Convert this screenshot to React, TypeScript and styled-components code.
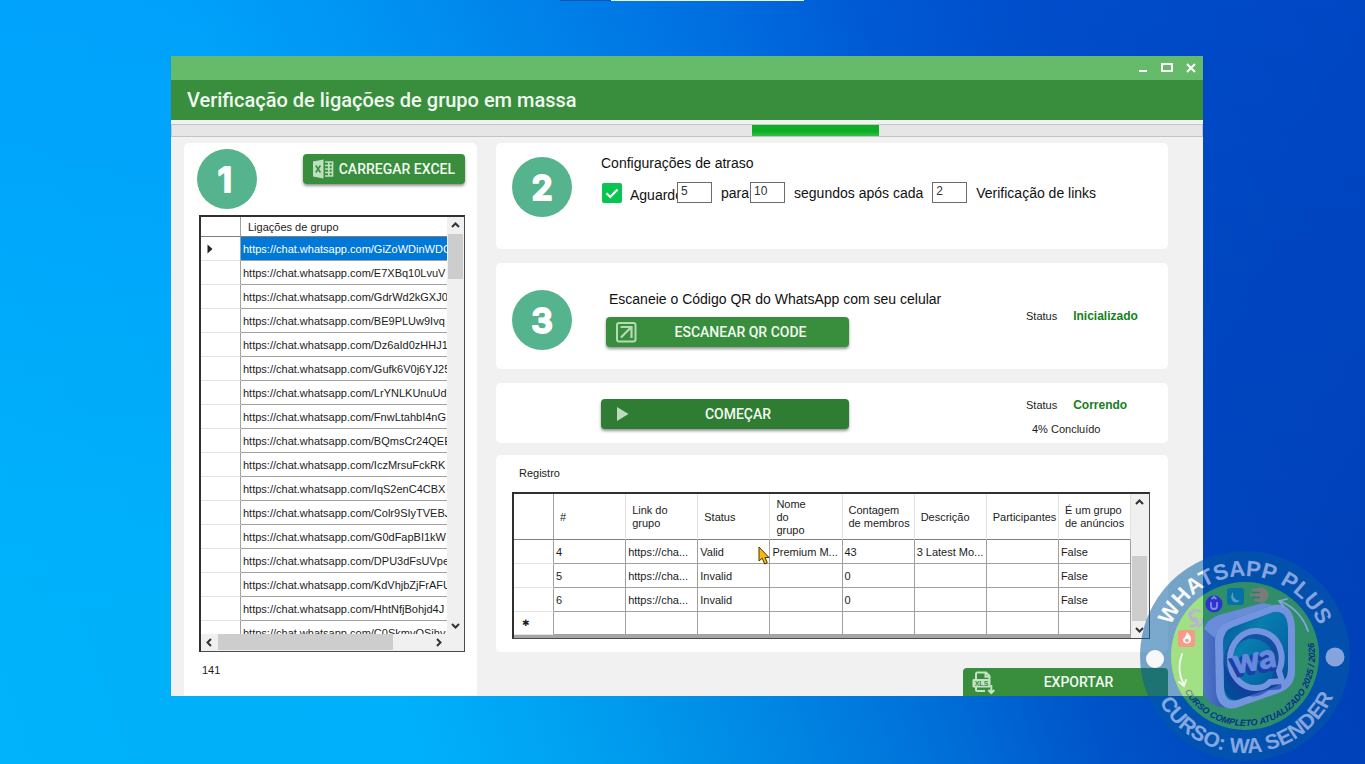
import React from "react";
import styled, { createGlobalStyle, css } from "styled-components";

const GlobalStyle = createGlobalStyle`
  *, *::before, *::after { box-sizing: border-box; }
  body {
    margin: 0;
    font-family: "Liberation Sans", Arial, sans-serif;
    font-size: 11px;
    line-height: 13px;
    color: #1c1c1c;
  }
`;

const Desktop = styled.main`
  position: relative;
  min-height: 100vh;
  padding: 56px 162px 68px 171px;
  overflow: hidden;
  background:
    linear-gradient(rgba(0, 110, 255, 0.22), rgba(0, 110, 255, 0) 80%),
    linear-gradient(72deg, #00b3fb 0%, #00aff9 27%, #009ff0 37%, #0088e4 48%, #006fd8 59%, #0053c8 69%, #0043bb 80%, #003cb4 100%);
`;

const TopStrip = styled.div`
  position: absolute;
  top: 0;
  left: 41%;
  width: 244px;
  height: 1px;
  background: linear-gradient(to right, #0057b8 51px, #e8f2fb 51px);
`;

const AppWindow = styled.section`
  min-width: 960px;
  background: #f1f1f1;
`;

const TitleBar = styled.div`
  display: flex;
  justify-content: flex-end;
  height: 24px;
  background: #66bb6a;
`;

const WindowButton = styled.button`
  display: grid;
  place-items: center;
  width: 24px;
  height: 24px;
  padding: 0;
  border: 0;
  background: transparent;
`;

const Header = styled.header`
  display: flex;
  align-items: center;
  height: 40px;
  padding: 0 16px;
  background: #388e3c;
  h1 {
    margin: 0;
    font: 500 20px/24px Roboto, sans-serif;
    color: #f0f8f0;
  }
`;

const Progress = styled.div`
  height: 13px;
  margin-top: 4px;
  border: 1px solid #c4c4c4;
  background: #e6e6e6;
`;

const ProgressChunk = styled.div`
  width: 127px;
  height: 11px;
  margin-left: 56.3%;
  background: linear-gradient(#0cae25 60%, #38bd4d);
`;

const Content = styled.div`
  display: grid;
  grid-template-columns: 293px 1fr;
  gap: 19px;
  padding: 6px 35px 0 13px;
`;

const Card = styled.section<{ $height?: number }>`
  background: #fff;
  border-radius: 5px;
  min-height: ${(p) => (p.$height ? `${p.$height}px` : "0")};
`;

const ListCard = styled(Card)`
  padding: 6px 12px 0 13px;
  border-radius: 5px 5px 0 0;
`;

const ListTop = styled.div`
  display: flex;
  justify-content: space-between;
  align-items: flex-start;
  margin-bottom: 6px;
  button { margin-top: 5px; }
`;

const BadgeSvg = styled.svg`
  display: block;
  width: 60px;
  height: 60px;
`;

const ActionButton = styled.button<{ $dark?: boolean; $clipped?: boolean }>`
  display: flex;
  align-items: center;
  gap: 6px;
  height: ${(p) => (p.$clipped ? "28px" : "30px")};
  padding: 0 10px;
  border: 0;
  border-radius: ${(p) => (p.$clipped ? "4px 4px 0 0" : "4px")};
  background: ${(p) => (p.$dark ? "#2e7d32" : "#388e3c")};
  box-shadow: ${(p) => (p.$clipped ? "none" : "0 2px 3px rgba(0, 0, 0, 0.42)")};
  color: #f2faf2;
  font: 500 14px/20px Roboto, sans-serif;
  white-space: nowrap;
  svg { flex: none; width: 20px; height: 20px; overflow: visible; }
  span { flex: 1; text-align: center; }
`;

const GridFrame = styled.div`
  border: 1px solid #4a4a4a;
  border-top: 2px solid #303030;
  border-left: 2px solid #303030;
`;

const ListFrame = styled(GridFrame)`
  display: grid;
  grid-template-columns: minmax(0, 1fr) 17px;
  grid-template-rows: 417px 17px;
  margin-left: 2px;
`;

const Clip = styled.div`
  overflow: hidden;
`;

const Total = styled.p`
  margin: 11px 5px;
  font-size: 11px;
  line-height: 14px;
`;

const LinkTable = styled.table`
  width: 100%;
  table-layout: fixed;
  border-spacing: 0;
  th, td {
    height: 24px;
    padding: 1px 0 0 2px;
    overflow: hidden;
    white-space: nowrap;
    text-align: left;
    font-weight: 400;
    border-bottom: 1px solid #a0a0a0;
  }
  th { height: 20px; padding-left: 7px; border-bottom-color: #808080; }
  th:first-child { width: 40px; border-right: 1px solid #a0a0a0; }
  td:first-child {
    padding-left: 6px;
    border-right: 1px solid #a0a0a0;
    border-bottom-color: #e2e2e2;
  }
  svg { display: block; }
`;

const LinkCell = styled.td<{ $selected?: boolean }>`
  ${(p) =>
    p.$selected &&
    css`
      background: #0078d7;
      color: #fff;
    `}
`;

const Scroll = styled.div<{ $horizontal?: boolean }>`
  display: flex;
  flex-direction: ${(p) => (p.$horizontal ? "row" : "column")};
  background: #f0f0f0;
`;

const ScrollButton = styled.button`
  display: grid;
  flex: none;
  place-items: center;
  width: 17px;
  height: 17px;
  padding: 0;
  border: 0;
  background: transparent;
`;

const ScrollTrack = styled.div<{ $horizontal?: boolean; $end?: boolean }>`
  display: flex;
  flex: 1;
  flex-direction: ${(p) => (p.$horizontal ? "row" : "column")};
  justify-content: ${(p) => (p.$end ? "flex-end" : "flex-start")};
`;

const Thumb = styled.div<{ $length: number; $horizontal?: boolean }>`
  flex: none;
  background: #cdcdcd;
  width: ${(p) => (p.$horizontal ? `${p.$length}px` : "15px")};
  height: ${(p) => (p.$horizontal ? "16px" : `${p.$length}px`)};
  margin: ${(p) => (p.$horizontal ? "0" : "0 1px")};
`;

const RightColumn = styled.div`
  display: flex;
  flex-direction: column;
  gap: 12px;
  min-width: 0;
`;

const Steps = styled.div`
  display: flex;
  flex-direction: column;
  gap: 14px;
`;

const StepCard = styled(Card)`
  display: grid;
  grid-template-columns: 89px 1fr auto;
  padding-left: 16px;
`;

const BadgeSlot = styled.div<{ $top: number }>`
  padding-top: ${(p) => p.$top}px;
`;

const Stack = styled.div<{ $top: number; $left?: number }>`
  display: flex;
  flex-direction: column;
  align-items: flex-start;
  gap: 10px;
  padding: ${(p) => p.$top}px 0 0 ${(p) => p.$left ?? 0}px;
`;

const Lead = styled.p<{ $indent?: number }>`
  margin: 0 0 0 ${(p) => p.$indent ?? 0}px;
  font-size: 14px;
  line-height: 16px;
  color: #111;
`;

const DelayRow = styled.div`
  display: flex;
  align-items: center;
  height: 22px;
  padding-left: 1px;
  font-size: 14px;
  line-height: 18px;
  color: #111;
  white-space: nowrap;
`;

const Check = styled.input`
  appearance: none;
  flex: none;
  width: 20px;
  height: 20px;
  margin: 2px 8px 0 0;
  border-radius: 2px;
  background: #08c552
    url("data:image/svg+xml,%3Csvg xmlns='http://www.w3.org/2000/svg' viewBox='0 0 20 20'%3E%3Cpath d='M4.5 10.2l3.8 3.8 7.2-7.4' fill='none' stroke='white' stroke-width='2.2'/%3E%3C/svg%3E");
`;

const WaitLabel = styled.label`
  width: 47px;
  margin-top: 6px;
  overflow: hidden;
`;

const DelayLabel = styled.label<{ $before?: number; $after?: number }>`
  margin: 2px ${(p) => p.$after ?? 0}px 0 ${(p) => p.$before ?? 0}px;
`;

const NumberBox = styled.input`
  flex: none;
  width: 35px;
  height: 21px;
  padding: 0 3px 2px;
  border: 1px solid #6c6c6c;
  border-radius: 0;
  background: #fff;
  font: 12px/16px "Liberation Sans", Arial, sans-serif;
  color: #333;
`;

const StatusBlock = styled.div<{ $top: number }>`
  display: flex;
  flex-direction: column;
  gap: 8px;
  width: 142px;
  padding-top: ${(p) => p.$top}px;
  line-height: 16px;
  p { margin: 0; }
  p + p { padding-left: 6px; }
  strong { margin-left: 16px; font-size: 12px; color: #15801a; }
`;

const LogCard = styled(Card)`
  padding: 11px 18px 14px 16px;
  h2 {
    margin: 0 0 12px 7px;
    font-size: 11px;
    line-height: 14px;
    font-weight: 400;
  }
`;

const LogFrame = styled(GridFrame)`
  display: grid;
  grid-template-columns: minmax(0, 1fr) 18px;
  height: 147px;
  margin-bottom: -1px;
  background: #a6a6a6;
`;

const LogTable = styled.table`
  width: 100%;
  table-layout: fixed;
  border-spacing: 0;
  background: #fff;
  th, td {
    position: relative;
    height: 24px;
    padding: 1px 2px 0;
    text-align: left;
    font-weight: 400;
    white-space: nowrap;
    border-right: 1px solid #a0a0a0;
    border-bottom: 1px solid #a0a0a0;
  }
  th {
    height: 46px;
    padding: 1px 0 0 6px;
    border-right-color: #e2e2e2;
    border-bottom-color: #808080;
    white-space: pre-line;
  }
  th:first-child { width: 40px; border-right-color: #a0a0a0; }
  td:first-child { border-bottom-color: #e2e2e2; padding-left: 8px; font-size: 9px; }
  tr:last-child td { height: 23px; }
`;

const Pointer = styled.svg`
  position: absolute;
  right: -1px;
  top: 6px;
  z-index: 2;
  width: 12px;
  height: 19px;
`;

const ExportRow = styled.footer`
  display: flex;
  justify-content: flex-end;
  padding-top: 4px;
  button { width: 205px; }
`;

const WideButton = styled(ActionButton)<{ $width: number }>`
  width: ${(p) => p.$width}px;
`;

const Watermark = styled.svg`
  position: absolute;
  right: 14px;
  bottom: 2px;
  width: 212px;
  height: 212px;
  opacity: 0.52;
`;

function StepBadge({ n }: { n: number }) {
  return (
    <BadgeSvg viewBox="0 0 60 60" role="img" aria-label={`Passo ${n}`}>
      <circle cx="30" cy="30" r="30" fill="#55b38d" />
      <text
        x={n === 1 ? 28 : 30}
        y="43"
        textAnchor="middle"
        fontFamily="Inter, sans-serif"
        fontWeight="600"
        fontSize="34"
        fill="#fff"
        stroke="#fff"
        strokeWidth="2"
        strokeLinejoin="round"
      >
        {n}
      </text>
    </BadgeSvg>
  );
}

const arrowPaths = {
  up: "M2 7l3.500-3.500L9 7",
  down: "M2 4l3.500 3.500L9 4",
  left: "M7 2L3.500 5.500 7 9",
  right: "M4 2l3.500 3.500L4 9",
};

function Arrow({ dir }: { dir: keyof typeof arrowPaths }) {
  return (
    <ScrollButton type="button" aria-label={dir}>
      <svg width="11" height="11" viewBox="0 0 11 11">
        <path d={arrowPaths[dir]} fill="none" stroke="#333" strokeWidth="2" />
      </svg>
    </ScrollButton>
  );
}

function ExcelIcon() {
  return (
    <svg viewBox="0 0 20 20" aria-hidden="true">
      <path d="M0 2.500L10.500 0.500v19L0 17.500z" fill="#bfe0c0" />
      <path d="M2.800 6.500l4.600 7M7.400 6.500l-4.600 7" stroke="#388e3c" strokeWidth="1.600" />
      <path d="M12 3h7.500v14H12M12 6.500h7.500M12 10h7.500M12 13.500h7.500M15.800 3v14" fill="none" stroke="#bfe0c0" strokeWidth="1.700" />
    </svg>
  );
}

function ScanIcon() {
  return (
    <svg viewBox="0 0 20 20" aria-hidden="true">
      <rect x="1" y="1" width="18.500" height="18.500" rx="2" fill="none" stroke="#b4dab6" strokeWidth="2" />
      <path d="M4.500 5h11v11M15.300 5L5 15.500" fill="none" stroke="#b4dab6" strokeWidth="2.200" />
    </svg>
  );
}

function PlayIcon() {
  return (
    <svg viewBox="0 0 20 20" aria-hidden="true">
      <path d="M6 3l11.500 7L6 17z" fill="#bcdcbd" />
    </svg>
  );
}

function XlsIcon() {
  return (
    <svg viewBox="0 0 20 20" aria-hidden="true">
      <path d="M3 7.500V2Q3 .5 4.500.5h8.500l3.500 3.500v3.500M3 15v2.500Q3 19 4.500 19H12M12.500.8v4h4" fill="none" stroke="#c5e3c6" strokeWidth="2" />
      <rect x="-0.500" y="7" width="18" height="8.500" rx="1.200" fill="#c5e3c6" />
      <text x="8.500" y="13.800" textAnchor="middle" fontFamily="Liberation Sans, sans-serif" fontWeight="700" fontSize="7" fill="#388e3c">
        XLS
      </text>
      <path d="M18.300 13v7.500M15.300 18l3 3 3-3" fill="none" stroke="#c5e3c6" strokeWidth="2" />
    </svg>
  );
}

function CourseSeal() {
  return (
    <Watermark viewBox="0 0 212 212" role="img" aria-label="Curso WA Sender">
      <defs>
        <path id="sealTop" d="M26 106a80 80 0 0 1 160 0" />
        <path id="sealBottom" d="M9 106a97 97 0 0 0 194 0" />
        <path id="sealInner" d="M36 106a70 70 0 0 0 140 0a70 70 0 0 0 -12 -39" />
        <linearGradient id="tile" x1="0" y1="0" x2="1" y2="1">
          <stop offset="0" stopColor="#0a5a70" />
          <stop offset="0.350" stopColor="#12b3a6" />
          <stop offset="0.650" stopColor="#0a8f94" />
          <stop offset="1" stopColor="#053f6b" />
        </linearGradient>
        <linearGradient id="side" x1="0" y1="0" x2="1" y2="0">
          <stop offset="0" stopColor="#9ca0d0" />
          <stop offset="1" stopColor="#4c529c" />
        </linearGradient>
      </defs>
      <circle cx="106" cy="106" r="105" fill="#045ca3" />
      <circle cx="106" cy="106" r="74" fill="#5ad41f" />
      <g fontFamily="Liberation Sans, sans-serif" fontWeight="700" fill="#fff" textAnchor="middle">
        <text fontSize="22">
          <textPath href="#sealTop" startOffset="50%">WHATSAPP PLUS</textPath>
        </text>
        <text fontSize="21">
          <textPath href="#sealBottom" startOffset="51%">CURSO: WA SENDER</textPath>
        </text>
      </g>
      <text fontFamily="Liberation Sans, sans-serif" fontWeight="700" fontStyle="italic" fontSize="9" fill="#06245c">
        <textPath href="#sealInner" startOffset="37">CURSO COMPLETO ATUALIZADO 2025 / 2026</textPath>
      </text>
      <circle cx="16" cy="109" r="9" fill="#fff" />
      <circle cx="196" cy="107" r="9.500" fill="#fff" />

      <path d="M82 65Q64 69 64 84L64 138Q65 152 80 157L98 158V62z" fill="url(#side)" />
      <path d="M134 55L90 71Q76 76 76 91L77 142Q80 161 97 158L142 142Q156 136 156 121V78Q155 52 134 55z" fill="#dcdeff" />
      <path d="M134 62L94 77Q84 81 84 93L85 140Q87 153 98 150L138 136Q149 131 149 119V80Q149 59 134 62z" fill="url(#tile)" />
      <path d="M134 55L90 71Q78 76 76 88L65 79Q68 69 80 65L124 53z" fill="#c9cdf6" />
      <path d="M98 150Q87 150 85 136V112Q92 138 122 139L138 136z" fill="#0a2f66" opacity="0.700" />
      <path d="M116 82C101 82 89 95 90 112C91 128 103 141 117 140Q124 139 130 134L141 133L139 123Q143 114 141 104Q136 84 116 82z" fill="none" stroke="#2c3288" strokeWidth="7" strokeLinejoin="round" transform="translate(-2 3)" opacity="0.600" />
      <path d="M118 81C104 80 91 93 91 109C91 126 103 139 118 138Q126 138 131 132L143 131L140 121Q144 112 142 102Q138 83 118 81z" fill="none" stroke="#dcdeff" strokeWidth="6" strokeLinejoin="round" />
      <g fontFamily="Lato, sans-serif" fontWeight="900" fontSize="33" textAnchor="middle">
        <text transform="translate(115 123) rotate(-10)" fill="#343a94" stroke="#343a94" strokeWidth="3">wa</text>
        <text transform="translate(117 120) rotate(-10)" fill="#c3c9fb" stroke="#c3c9fb" strokeLinejoin="round" strokeWidth="1">wa</text>
      </g>

      <rect x="39" y="80" width="17" height="17" rx="3" fill="#ff4c2e" />
      <path d="M48 82q5 5 4 8a4 4 0 1 1-8-1q2-1 4-7z" fill="#fff" />
      <circle cx="48" cy="90.500" r="1.800" fill="#ff4c2e" />
      <g fill="none" stroke="#7f80b6" strokeWidth="2.500">
        <path d="M62 62q-7-4-10 0t1 6q6 0 6 4t-8 4" />
        <path d="M55 61q-7 5-2 9 5 1 5 4M58 77q8-3 5-9" />
      </g>
      <circle cx="75" cy="54" r="8.500" fill="#5a1ee0" />
      <path d="M72 52v4q0 3 3 3t3-3v-4M72.500 49l2.500-2 2.500 2" fill="none" stroke="#e3d8ff" strokeWidth="1.800" />
      <rect x="88" y="38" width="17" height="17" rx="3" fill="#0c9a96" />
      <path d="M94 42q-1 8 7 9-6 3-8-1-2-4 1-8z" fill="#a5f0d5" />
      <circle cx="122" cy="45" r="7.500" fill="#e8b03c" />
      <path d="M113 40h8M111 45h8M115 50h7" stroke="#e8b03c" strokeWidth="2.500" />
      <path d="M114 42.500h7M114 47.500h7" stroke="#49b030" strokeWidth="1.500" />
      <g fill="none" stroke="#fff" strokeWidth="1.800" strokeLinecap="round">
        <path d="M43 104q-6 16 2 31M40 132l5 4 2-6" />
        <path d="M169 81q-7-21-28-30M145 57l-5-6 8-2" />
      </g>
    </Watermark>
  );
}

const links = [
  "GiZoWDinWDC",
  "E7XBq10LvuV",
  "GdrWd2kGXJ0",
  "BE9PLUw9Ivq",
  "Dz6aId0zHHJ1",
  "Gufk6V0j6YJ25",
  "LrYNLKUnuUd",
  "FnwLtahbI4nG",
  "BQmsCr24QEE",
  "IczMrsuFckRK",
  "IqS2enC4CBX",
  "Colr9SIyTVEBJ",
  "G0dFapBI1kW",
  "DPU3dFsUVpe",
  "KdVhjbZjFrAFU",
  "HhtNfjBohjd4J",
  "C0SkmyQSihv",
];

const columns = [
  "#",
  "Link do\ngrupo",
  "Status",
  "Nome\ndo\ngrupo",
  "Contagem\nde membros",
  "Descrição",
  "Participantes",
  "É um grupo\nde anúncios",
];

const logRows = [
  ["4", "https://cha...", "Valid", "Premium M...", "43", "3 Latest Mo...", "", "False"],
  ["5", "https://cha...", "Invalid", "", "0", "", "", "False"],
  ["6", "https://cha...", "Invalid", "", "0", "", "", "False"],
  ["", "", "", "", "", "", "", ""],
];

export default function App() {
  return (
    <>
      <GlobalStyle />
      <Desktop>
        <TopStrip />
        <AppWindow>
          <TitleBar>
            <WindowButton type="button" aria-label="Minimizar">
              <svg width="12" height="12" viewBox="0 0 12 12"><path d="M2 9h8" stroke="#fff" strokeWidth="2" /></svg>
            </WindowButton>
            <WindowButton type="button" aria-label="Maximizar">
              <svg width="12" height="12" viewBox="0 0 12 12"><path d="M1 2h10v7H1z" fill="none" stroke="#fff" strokeWidth="2" /></svg>
            </WindowButton>
            <WindowButton type="button" aria-label="Fechar">
              <svg width="12" height="12" viewBox="0 0 12 12"><path d="M2 2l8 8M10 2l-8 8" stroke="#fff" strokeWidth="2" /></svg>
            </WindowButton>
          </TitleBar>
          <Header>
            <h1>Verificação de ligações de grupo em massa</h1>
          </Header>
          <Progress role="progressbar">
            <ProgressChunk />
          </Progress>

          <Content>
            <ListCard>
              <ListTop>
                <StepBadge n={1} />
                <ActionButton type="button">
                  <ExcelIcon />
                  <span>CARREGAR EXCEL</span>
                </ActionButton>
              </ListTop>
              <ListFrame>
                <Clip>
                  <LinkTable>
                    <thead>
                      <tr>
                        <th />
                        <th>Ligações de grupo</th>
                      </tr>
                    </thead>
                    <tbody>
                      {links.map((code, i) => (
                        <tr key={code}>
                          <td>
                            {i === 0 && (
                              <svg width="6" height="10" viewBox="0 0 6 10">
                                <path d="M0.500 0.500L5.500 5l-5 4.500z" fill="#222" />
                              </svg>
                            )}
                          </td>
                          <LinkCell $selected={i === 0}>https://chat.whatsapp.com/{code}</LinkCell>
                        </tr>
                      ))}
                    </tbody>
                  </LinkTable>
                </Clip>
                <Scroll>
                  <Arrow dir="up" />
                  <ScrollTrack><Thumb $length={45} /></ScrollTrack>
                  <Arrow dir="down" />
                </Scroll>
                <Scroll $horizontal>
                  <Arrow dir="left" />
                  <ScrollTrack $horizontal><Thumb $horizontal $length={175} /></ScrollTrack>
                  <Arrow dir="right" />
                </Scroll>
                <Scroll />
              </ListFrame>
              <Total>141</Total>
            </ListCard>

            <RightColumn>
              <Steps>
                <StepCard $height={106}>
                  <BadgeSlot $top={14}><StepBadge n={2} /></BadgeSlot>
                  <Stack $top={12}>
                    <Lead>Configurações de atraso</Lead>
                    <DelayRow>
                      <Check type="checkbox" id="wait" defaultChecked />
                      <WaitLabel htmlFor="wait">Aguarde</WaitLabel>
                      <NumberBox type="text" aria-label="De" defaultValue="5" />
                      <DelayLabel htmlFor="delayTo" $before={9} $after={1}>para</DelayLabel>
                      <NumberBox type="text" id="delayTo" defaultValue="10" />
                      <DelayLabel htmlFor="every" $before={9} $after={9}>segundos após cada</DelayLabel>
                      <NumberBox type="text" id="every" defaultValue="2" />
                      <DelayLabel htmlFor="every" $before={9}>Verificação de links</DelayLabel>
                    </DelayRow>
                  </Stack>
                </StepCard>

                <StepCard $height={106}>
                  <BadgeSlot $top={27}><StepBadge n={3} /></BadgeSlot>
                  <Stack $top={28} $left={5}>
                    <Lead $indent={3}>Escaneie o Código QR do WhatsApp com seu celular</Lead>
                    <WideButton type="button" $width={243}>
                      <ScanIcon />
                      <span>ESCANEAR QR CODE</span>
                    </WideButton>
                  </Stack>
                  <StatusBlock $top={45}>
                    <p>Status<strong>Inicializado</strong></p>
                  </StatusBlock>
                </StepCard>

                <StepCard $height={60}>
                  <BadgeSlot $top={0} />
                  <Stack $top={16}>
                    <WideButton type="button" $dark $width={248}>
                      <PlayIcon />
                      <span>COMEÇAR</span>
                    </WideButton>
                  </Stack>
                  <StatusBlock $top={14}>
                    <p>Status<strong>Correndo</strong></p>
                    <p>4% Concluído</p>
                  </StatusBlock>
                </StepCard>
              </Steps>

              <LogCard>
                <h2>Registro</h2>
                <LogFrame>
                  <div>
                    <LogTable>
                      <thead>
                        <tr>
                          <th />
                          {columns.map((name) => (
                            <th key={name}>{name}</th>
                          ))}
                        </tr>
                      </thead>
                      <tbody>
                        {logRows.map((row, r) => (
                          <tr key={r}>
                            <td>{r === logRows.length - 1 ? "✱" : ""}</td>
                            {row.map((value, c) => (
                              <td key={c}>
                                {value}
                                {r === 0 && c === 2 && (
                                  <Pointer viewBox="0 0 12 19">
                                    <path d="M1 1v14l3.200-2.800 2.500 5.800 2.600-1.200-2.300-5.300H11z" fill="#f7b90f" stroke="#4a3608" strokeWidth="1" />
                                  </Pointer>
                                )}
                              </td>
                            ))}
                          </tr>
                        ))}
                      </tbody>
                    </LogTable>
                  </div>
                  <Scroll>
                    <Arrow dir="up" />
                    <ScrollTrack $end><Thumb $length={65} /></ScrollTrack>
                    <Arrow dir="down" />
                  </Scroll>
                </LogFrame>
              </LogCard>

              <ExportRow>
                <ActionButton type="button" $clipped>
                  <XlsIcon />
                  <span>EXPORTAR</span>
                </ActionButton>
              </ExportRow>
            </RightColumn>
          </Content>
        </AppWindow>
        <CourseSeal />
      </Desktop>
    </>
  );
}
